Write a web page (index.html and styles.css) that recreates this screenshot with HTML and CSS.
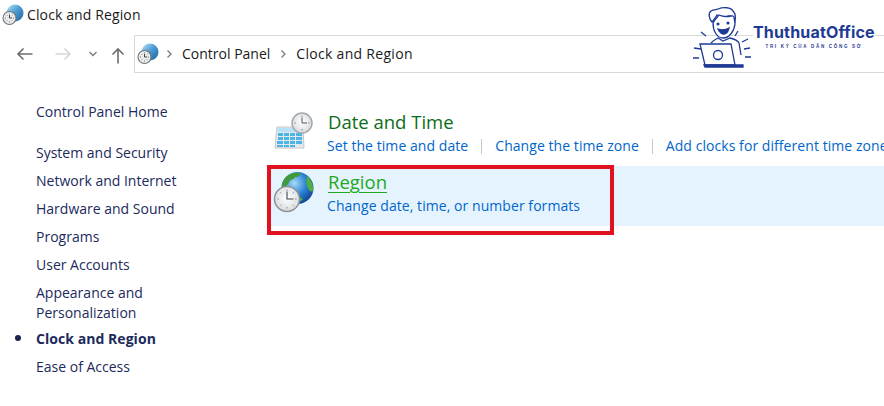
FILE: index.html
```html
<!DOCTYPE html>
<html lang="en">
<head>
<meta charset="utf-8">
<title>Clock and Region</title>
<link rel="stylesheet" href="styles.css">
</head>
<body>
<svg width="0" height="0" class="defs">
  <defs>
    <radialGradient id="globe" cx="40%" cy="35%" r="70%"><stop offset="0" stop-color="#a5dcf8"/><stop offset=".55" stop-color="#2a80d4"/><stop offset="1" stop-color="#123f8f"/></radialGradient>
    <radialGradient id="face" cx="50%" cy="45%" r="60%"><stop offset="0" stop-color="#ffffff"/><stop offset="1" stop-color="#d4d8dc"/></radialGradient>
    <linearGradient id="small-sphere" x1="0" y1="0" x2="1" y2="1"><stop offset="0" stop-color="#c5e6f7"/><stop offset=".45" stop-color="#4f9fd6"/><stop offset="1" stop-color="#1a5f9c"/></linearGradient>
    <symbol id="small-globe" viewBox="0 0 22 22">
      <circle cx="13" cy="9" r="8.500" fill="url(#small-sphere)"/>
      <circle cx="7.500" cy="14" r="6.500" fill="#e9ebec" stroke="#6f7579" stroke-width="1.100"/>
      <path d="M7.500 9.500v1M7.500 17.500v1M3 14h1M11 14h1M4.500 11l.6.6M10.500 11l-.6.6M4.500 17l.6-.6M10.500 17l-.6-.6" stroke="#555" stroke-width=".8"/>
      <path d="M7.500 11v3h2.500" fill="none" stroke="#333" stroke-width=".9"/>
    </symbol>
  </defs>
</svg>
<header class="title-row">
  <svg class="icon-small"><use href="#small-globe"/></svg>
  <span class="title-text">Clock and Region</span>
</header>
<nav class="nav-row">
  <svg class="nav-icon" width="18" height="14" viewBox="0 0 18 14"><path d="M16.500 7H2M7.500 1.500 2 7l5.500 5.500" fill="none" stroke="#6d6d6d" stroke-width="1.600"/></svg>
  <svg class="nav-icon forward" width="18" height="14" viewBox="0 0 18 14"><path d="M1.500 7H16M10.500 1.500 16 7l-5.500 5.500" fill="none" stroke="#d6d6d6" stroke-width="1.600"/></svg>
  <svg class="nav-icon chevron" width="10" height="6" viewBox="0 0 10 6"><path d="M1.500 1 5 4.500 8.500 1" fill="none" stroke="#7a7a7a" stroke-width="1.400"/></svg>
  <svg class="nav-icon up" width="14" height="17" viewBox="0 0 14 17"><path d="M7 16.500V2M1.500 7.500 7 2l5.500 5.500" fill="none" stroke="#6d6d6d" stroke-width="1.600"/></svg>
  <div class="address">
    <svg class="icon-small"><use href="#small-globe"/></svg>
    <svg class="crumb-arrow" width="7" height="10" viewBox="0 0 7 10"><path d="M1.500 1.500 5 5 1.500 8.500" fill="none" stroke="#7a7a7a" stroke-width="1.300"/></svg>
    <span class="crumb">Control Panel</span>
    <svg class="crumb-arrow" width="7" height="10" viewBox="0 0 7 10"><path d="M1.500 1.500 5 5 1.500 8.500" fill="none" stroke="#7a7a7a" stroke-width="1.300"/></svg>
    <span class="crumb">Clock and Region</span>
  </div>
</nav>
<div class="body-grid">
  <aside class="side">
    <a class="side-home">Control Panel Home</a>
    <ul class="side-list">
      <li>System and Security</li>
      <li>Network and Internet</li>
      <li>Hardware and Sound</li>
      <li>Programs</li>
      <li>User Accounts</li>
      <li class="two-line">Appearance and<br>Personalization</li>
      <li class="current">Clock and Region</li>
      <li>Ease of Access</li>
    </ul>
  </aside>
  <main class="content">
    <section class="cat">
      <svg class="cat-icon" width="44" height="44" viewBox="0 0 44 44">
        <path d="M5 15h26l1 21H3z" fill="#e3e8eb" stroke="#c2c8cc"/>
        <rect x="6" y="16" width="24" height="4" fill="#b5e2f7"/>
        <g fill="#4db4e6"><rect x="6" y="21" width="5" height="3"/><rect x="12" y="21" width="5" height="3"/><rect x="18" y="21" width="5" height="3"/><rect x="24" y="21" width="6" height="3"/><rect x="6" y="25" width="5" height="3"/><rect x="12" y="25" width="5" height="3"/><rect x="18" y="25" width="5" height="3"/><rect x="24" y="25" width="6" height="3"/><rect x="5" y="29" width="6" height="3"/><rect x="12" y="29" width="5" height="3"/><rect x="18" y="29" width="5" height="3"/><rect x="24" y="29" width="6" height="3"/><rect x="5" y="33" width="6" height="2"/><rect x="12" y="33" width="5" height="2"/><rect x="18" y="33" width="5" height="2"/></g>
        <circle cx="30" cy="11" r="10" fill="url(#face)" stroke="#a3a9ad" stroke-width="1.500"/>
        <path d="M30 3.500v1.500M30 17v1.500M22.500 11H24M36 11h1.500" stroke="#8a8f93"/>
        <path d="M30 5.500V11h5" fill="none" stroke="#555" stroke-width="1"/>
      </svg>
      <div class="cat-text">
        <h2 class="cat-title">Date and Time</h2>
        <div class="links">
          <a>Set the time and date</a><i class="sep"></i><a>Change the time zone</a><i class="sep"></i><a>Add clocks for different time zones</a>
        </div>
      </div>
    </section>
    <section class="cat active">
      <svg class="cat-icon" width="44" height="44" viewBox="0 0 44 44">
        <circle cx="25.500" cy="16" r="16" fill="url(#globe)"/>
        <path d="M13 6c4-5 10-6 15-5 2 2-2 4-5 4-1 3-5 2-6 5-1 4-4 4-7 5-1-3 1-6 3-9z" fill="#3f9a3a"/>
        <path d="M35 4c4 3 7 9 6 15-2 1-4 0-5-3-2-3-2-9-1-12zM23 26c3-2 6-1 8 1-2 2-4 4-7 4-2-2-2-3-1-5z" fill="#4fae3c"/>
        <circle cx="15" cy="27" r="12.500" fill="url(#face)" stroke="#8d9398" stroke-width="1.500"/>
        <path d="M15 17.500v1.500M15 35v1.500M5.500 27H7M23 27h1.500M8.300 20.300l1 1M21.700 20.300l-1 1M8.300 33.700l1-1M21.700 33.700l-1-1" stroke="#8a8f93"/>
        <path d="M15 19.500V27h6.500" fill="none" stroke="#444" stroke-width="1.100"/>
      </svg>
      <div class="cat-text">
        <h2 class="cat-title link-title">Region</h2>
        <div class="links"><a>Change date, time, or number formats</a></div>
      </div>
    </section>
  </main>
</div>
<div class="red-box"></div>
<div class="logo">
  <svg class="logo-art" width="64" height="66" viewBox="0 0 64 66" fill="none" stroke="#1d3a94" stroke-width="1.300">
    <path d="M20 17c-3-3-4-9-1-11 3-2 5-1 7-2 5-2 13-2 15 2 2 2 3 5 2 10-1-3-3-5-6-5-5 1-10 0-12-1-1 2-3 4-5 7z" fill="#fff"/>
    <path d="M21 18c0 8 4 15 10 15s11-6 12-14c0-3-1-5-1-7-1-2-2-1-3-1-5 1-10 0-12-1-2 3-5 5-6 8z" fill="#fff"/>
    <path d="M26 24c3 1 8 1 11-1-1 4-3 6-5 6s-5-2-6-5z" fill="#1d3a94"/>
    <circle cx="26" cy="19" r=".9" fill="#1d3a94"/><circle cx="36" cy="18" r=".9" fill="#1d3a94"/>
    <path d="M19 38c3-3 5-4 7-5l5 3 7-3c4 1 8 3 9 5l2 12"/>
    <path d="M8 39h31l4 21H13z" fill="#fff"/>
    <circle cx="26" cy="50" r="4.500"/>
    <path d="M13 62h38v-2H12z" fill="#1d3a94"/>
    <path d="M9 27l5 4M2 43l7 1M1 53h6M56 34l-6 3M58 43l-6 1M59 52h-6M46 26l-3 5"/>
  </svg>
  <div class="logo-text">
    <div class="logo-name">ThuthuatOffice</div>
    <div class="logo-tag">TRI KỶ CỦA DÂN CÔNG SỞ</div>
  </div>
</div>
</body>
</html>
```

FILE: styles.css
```css
* { box-sizing: border-box; }
html, body { margin: 0; padding: 0; }
body {
  width: 884px;
  height: 406px;
  overflow: hidden;
  position: relative;
  background: #fff;
  font-family: "Open Sans", "Noto Sans", sans-serif;
  color: #1a1a1a;
}
.defs { position: absolute; }
.icon-small { width: 22px; height: 22px; flex: none; }
.title-row {
  height: 35px;
  display: flex;
  align-items: center;
  padding: 0 0 6px 2px;
  gap: 3px;
}
.title-text { font-size: 14px; letter-spacing: .12px; }
.nav-row {
  height: 38px;
  display: flex;
  align-items: center;
  padding-left: 16px;
}
.nav-icon { flex: none; }
.forward { margin-left: 20px; }
.chevron { margin-left: 16px; }
.up { margin-left: 13px; margin-right: 9px; margin-top: 3px; }
.address {
  flex: 1;
  height: 38px;
  margin-right: -10px;
  border: 1px solid #d9d9d9;
  display: flex;
  align-items: center;
  padding: 0 0 1px 2px;
  font-size: 14px;
}
.crumb-arrow { margin: 0 9px 0 7px; flex: none; }
.crumb + .crumb-arrow { margin: 0 9px 0 10px; }
.crumb { letter-spacing: 0; }
.crumb:last-child { letter-spacing: .3px; }
.body-grid {
  display: grid;
  grid-template-columns: 267px 1fr;
}
.side {
  padding: 29px 0 0 36px;
  font-size: 14px;
  letter-spacing: 0;
  color: #1c2a5c;
}
.side-home { display: block; line-height: 20px; margin-bottom: 21px; }
.side-list { list-style: none; margin: 0; padding: 0; }
.side-list li { line-height: 20px; margin-bottom: 8px; }
.side-list .two-line { margin-bottom: 6px; }
.side-list .current { font-weight: 700; position: relative; letter-spacing: .05px; }
.current::before {
  content: "";
  position: absolute;
  left: -21px;
  top: 6px;
  width: 6px;
  height: 6px;
  border-radius: 50%;
  background: #1c2350;
}
.content { padding-top: 33px; }
.cat {
  height: 60px;
  display: flex;
  align-items: flex-start;
  padding: 4px 0 0 5px;
  white-space: nowrap;
}
.cat-icon { flex: none; margin-right: 11px; margin-top: 2px; }
.active { background: #e5f3ff; }
.cat-title {
  margin: 0 0 0 1px;
  font-size: 18.500px;
  font-weight: 400;
  line-height: 24px;
  color: #0c6d19;
  letter-spacing: 0;
}
.link-title { color: #21a921; text-decoration: underline; text-decoration-thickness: 1px; text-underline-offset: 3px; }
.links { font-size: 14px; line-height: 20px; color: #0066cc; letter-spacing: .06px; display: flex; align-items: center; margin-top: 2px; }
.sep { width: 1px; height: 15px; background: #c9c9c9; margin: 0 13px; }
.red-box {
  position: absolute;
  left: 267px;
  top: 165px;
  width: 347px;
  height: 70px;
  border: 4px solid #e0121f;
}
.logo {
  position: absolute;
  left: 692px;
  top: 5px;
  display: flex;
  align-items: flex-start;
}
.logo-art { flex: none; }
.logo-text { margin: 18px 0 0 -3px; color: #1d3a94; }
.logo-name {
  font-family: "Inter", "Liberation Sans", sans-serif;
  font-weight: 700;
  font-size: 16px;
  line-height: 18px;
  letter-spacing: .17px;
  background: #fff;
}
.logo-tag {
  font-family: "Liberation Sans", sans-serif;
  font-weight: 700;
  font-size: 4.500px;
  letter-spacing: 1.700px;
  text-align: center;
  margin-top: 3px;
}
```
